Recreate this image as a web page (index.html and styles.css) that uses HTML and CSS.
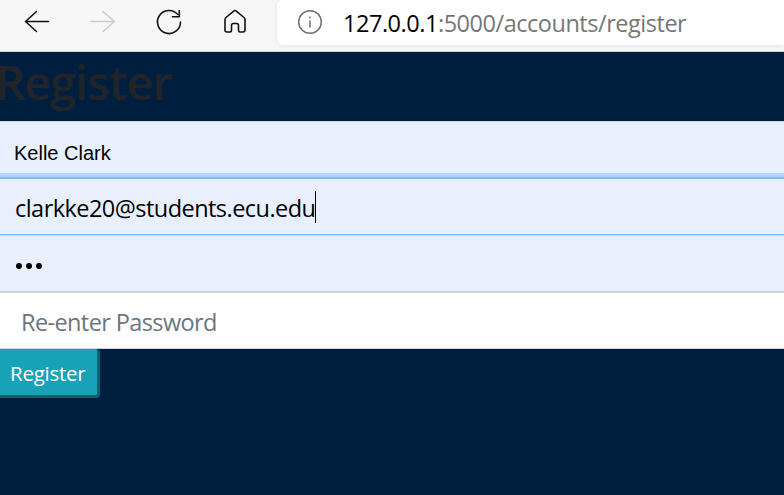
FILE: index.html
```
<!DOCTYPE html>
<html lang="en">
<head>
<meta charset="utf-8">
<title>Register</title>
<link rel="stylesheet" href="styles.css">
</head>
<body>
<header class="toolbar">
  <nav class="nav">
    <svg class="icon" viewBox="0 0 28 28"><path d="M26.500 13.500H3.500M14.500 3.500L3.500 13.500l11 10"/></svg>
    <svg class="icon icon-off" viewBox="0 0 28 28"><path d="M3 13.500H26.500M15 3.500L26.500 13.500 15 23.500"/></svg>
    <svg class="icon" viewBox="0 0 28 28"><path d="M26.500 14A11.500 11.500 0 1 1 23.700 6.500M25.300 2.500V8.700H18.500"/></svg>
    <svg class="icon" viewBox="0 0 28 28"><path d="M5 11.500Q5 10.300 6 9.500L14 2.900Q15 2.100 16 2.900L24 9.500Q25 10.300 25 11.500V22Q25 24 23 24H20Q18.500 24 18.500 22.500V17.500Q18.500 15.500 16.500 15.500H13.500Q11.500 15.500 11.500 17.500V22.500Q11.500 24 10 24H7Q5 24 5 22Z"/></svg>
  </nav>
  <div class="address">
    <svg class="info" viewBox="0 0 26 26"><circle cx="13" cy="13" r="11.300"/><path d="M13 11.500V18.500M13 7.500V9.300"/></svg>
    <span class="url"><b>127.0.0.1</b>:5000/accounts/register</span>
  </div>
</header>
<main>
  <h1>Register</h1>
  <form>
    <div class="field name"><span>Kelle Clark</span></div>
    <div class="field email"><span>clarkke20@students.ecu.edu</span><i class="caret"></i></div>
    <div class="field password"><i class="dot"></i><i class="dot"></i><i class="dot"></i></div>
    <div class="field confirm"><span>Re-enter Password</span></div>
    <button type="button">Register</button>
  </form>
</main>
</body>
</html>
```
FILE: styles.css
```
* { box-sizing: border-box; }
body {
  margin: 0;
  height: 495px;
  overflow: hidden;
  background: #001f3f;
  font-family: "Open Sans", "Noto Sans", sans-serif;
}
.toolbar {
  display: flex;
  height: 52px;
  background: #f7f7f7;
  border-bottom: 1px solid #cfcfcf;
}
.nav {
  display: flex;
  gap: 38px;
  width: 277px;
  padding: 8px 0 0 22px;
}
.icon {
  flex: none;
  width: 28px;
  height: 28px;
  fill: none;
  stroke: #111;
  stroke-width: 1.6;
  stroke-linecap: round;
  stroke-linejoin: round;
}
.icon-off { stroke: #ccc; }
.address {
  display: flex;
  flex: 1;
  height: 45px;
  padding-left: 20px;
  background: #fff;
  border-radius: 6px 0 0 6px;
  box-shadow: 0 1px 5px rgba(0, 0, 0, .09);
}
.info {
  width: 26px;
  height: 26px;
  margin-top: 9px;
  fill: none;
  stroke: #707070;
  stroke-width: 1.5;
}
.url {
  margin-left: 20px;
  font-size: 23.500px;
  line-height: 47px;
  letter-spacing: -.47px;
  color: #767676;
  white-space: nowrap;
}
.url b { font-weight: 400; color: #000; }
h1 {
  margin: 0 0 0 -5px;
  height: 69px;
  font-size: 47px;
  font-weight: 600;
  line-height: 61px;
  letter-spacing: -1.050px;
  color: #212529;
}
.field {
  display: flex;
  height: 57px;
  padding-left: 15px;
  background: #e8f0fe;
  font-size: 23.500px;
  line-height: 59px;
  color: #000;
  white-space: nowrap;
}
.name {
  height: 56px;
  padding-left: 14px;
  border-top: 1px solid #ced4da;
  border-bottom: 4px solid #b0d3ff;
  font: 20px/62px "Liberation Sans", Arial, sans-serif;
}
.email {
  height: 58px;
  border-top: 2px solid #80bdff;
  border-bottom: 1px solid #80bdff;
  letter-spacing: -.54px;
}
.caret {
  width: 1px;
  height: 32px;
  margin-top: 12px;
  background: #000;
}
.password {
  align-items: center;
  gap: 4px;
  height: 58px;
  padding-left: 16px;
  border-top: 1px solid #ced4da;
  border-bottom: 2px solid #ced4da;
}
.dot {
  width: 6px;
  height: 6px;
  margin-top: 5px;
  border-radius: 50%;
  background: #000;
}
.confirm {
  height: 56px;
  padding-left: 21px;
  background: #fff;
  border-bottom: 1px solid #ced4da;
  letter-spacing: -.6px;
  color: #6c757d;
}
button {
  display: block;
  width: 100px;
  height: 49px;
  padding: 2px 0 0 10px;
  background: #17a2b8;
  border: solid #0d5f70;
  border-width: 0 3px 3px 0;
  border-radius: 0 4px 4px 0;
  font: 20.500px/44px "Open Sans", "Noto Sans", sans-serif;
  letter-spacing: -.25px;
  text-align: left;
  color: #fff;
}
```
